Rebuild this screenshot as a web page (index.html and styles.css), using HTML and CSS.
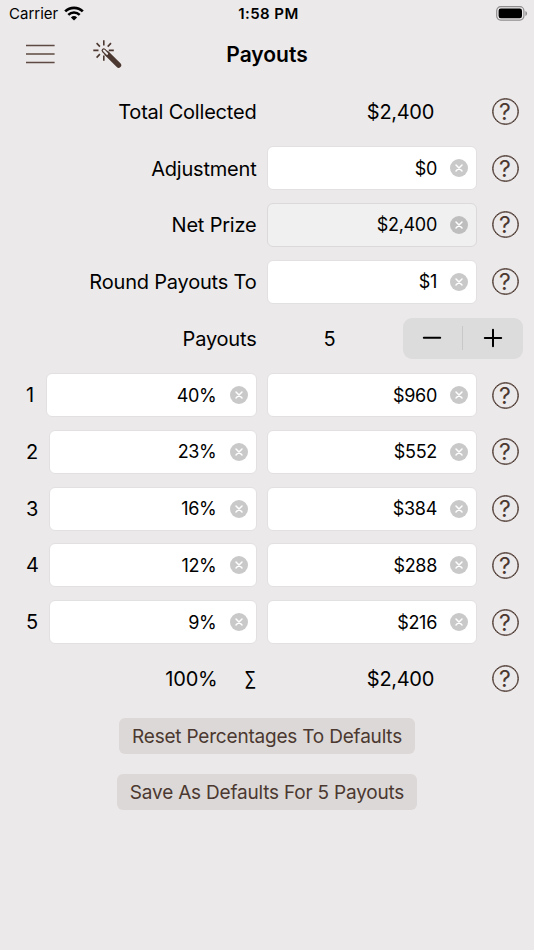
FILE: index.html
```html
<!DOCTYPE html>
<html lang="en">
<head>
    <meta charset="UTF-8">
    <meta name="viewport" content="width=device-width, initial-scale=1.0">
    <title>Payouts</title>
    <link rel="stylesheet" href="styles.css">
</head>
<body>
    <svg class="defs" width="0" height="0">
        <symbol id="clear" viewBox="0 0 18 18">
            <circle cx="9" cy="9" r="9"/>
            <path d="M6 6l6 6M12 6l-6 6" stroke="#fff" stroke-width="1.5" stroke-linecap="round"/>
        </symbol>
    </svg>

    <div class="status">
        <div class="carrier">
            <span>Carrier</span>
            <svg width="20" height="15" viewBox="0 0 20 15" fill="none" stroke="#000">
                <path d="M1.2 5.4a12.6 12.6 0 0 1 17.6 0" stroke-width="2.7"/>
                <path d="M4.3 8.8a8.2 8.2 0 0 1 11.4 0" stroke-width="2.5"/>
                <path d="M10 14.6L6.9 11.4a4.5 4.5 0 0 1 6.2 0z" fill="#000" stroke="none"/>
            </svg>
        </div>
        <div class="time">1:58 PM</div>
        <svg class="battery" width="32" height="15" viewBox="0 0 32 15">
            <rect x="0.7" y="0.7" width="27.2" height="13.4" rx="4" fill="none" stroke="#8f8d8e" stroke-width="1.2"/>
            <rect x="2.6" y="2.6" width="23.4" height="9.6" rx="2.2"/>
            <path d="M29.4 5c2.2 1 2.2 4 0 5z" fill="#8f8d8e"/>
        </svg>
    </div>

    <div class="navbar">
        <svg class="menu" width="29" height="20" viewBox="0 0 29 20" stroke="#5d4a42" stroke-width="1.3">
            <path d="M0 1.5h28.6M0 10h28.6M0 18.5h28.6"/>
        </svg>
        <svg class="wand" width="29" height="29" viewBox="0 0 29 29" fill="none" stroke="#4b3830">
            <path d="M10.8 0.3v5.2M10.8 15.5v5.2M0.3 10.4h5.2M15.8 10.4h5M3.6 3.1l3.3 3.5M18 3.1l-3.3 3.5M3.6 17.6l3.3-3.5" stroke-width="1.6"/>
            <path d="M10.8 10.6L15 14.6" stroke-width="4.4" stroke-linecap="round"/>
            <path d="M14 13.6L25.6 25.2" stroke-width="5.2" stroke-linecap="round"/>
            <path d="M10.9 10.6l3.2 3.2" stroke="#ece9ea" stroke-width="2.1" stroke-linecap="round"/>
        </svg>
        <h1>Payouts</h1>
    </div>

    <div class="rows">
        <div class="row">
            <div class="left"><span class="label">Total Collected</span></div>
            <div class="amount">$2,400</div>
            <div class="help">?</div>
        </div>
        <div class="row">
            <div class="left"><span class="label">Adjustment</span></div>
            <div class="field"><span>$0</span><svg class="clear"><use href="#clear"/></svg></div>
            <div class="help">?</div>
        </div>
        <div class="row">
            <div class="left"><span class="label">Net Prize</span></div>
            <div class="field disabled"><span>$2,400</span><svg class="clear"><use href="#clear"/></svg></div>
            <div class="help">?</div>
        </div>
        <div class="row">
            <div class="left"><span class="label">Round Payouts To</span></div>
            <div class="field"><span>$1</span><svg class="clear"><use href="#clear"/></svg></div>
            <div class="help">?</div>
        </div>
        <div class="row stepper-row">
            <div class="left"><span class="label">Payouts</span></div>
            <div class="count">5</div>
            <div class="stepper">
                <div class="step"><svg width="20" height="20" viewBox="0 0 20 20"><path d="M1.8 9.7h16.4"/></svg></div>
                <i class="divider"></i>
                <div class="step"><svg width="20" height="20" viewBox="0 0 20 20"><path d="M1.8 10h16.4M10 1.8v16.4"/></svg></div>
            </div>
        </div>
        <div class="row">
            <div class="left"><span class="place one">1</span><div class="field"><span>40%</span><svg class="clear"><use href="#clear"/></svg></div></div>
            <div class="field"><span>$960</span><svg class="clear"><use href="#clear"/></svg></div>
            <div class="help">?</div>
        </div>
        <div class="row">
            <div class="left"><span class="place">2</span><div class="field"><span>23%</span><svg class="clear"><use href="#clear"/></svg></div></div>
            <div class="field"><span>$552</span><svg class="clear"><use href="#clear"/></svg></div>
            <div class="help">?</div>
        </div>
        <div class="row">
            <div class="left"><span class="place">3</span><div class="field"><span>16%</span><svg class="clear"><use href="#clear"/></svg></div></div>
            <div class="field"><span>$384</span><svg class="clear"><use href="#clear"/></svg></div>
            <div class="help">?</div>
        </div>
        <div class="row">
            <div class="left"><span class="place">4</span><div class="field"><span>12%</span><svg class="clear"><use href="#clear"/></svg></div></div>
            <div class="field"><span>$288</span><svg class="clear"><use href="#clear"/></svg></div>
            <div class="help">?</div>
        </div>
        <div class="row">
            <div class="left"><span class="place">5</span><div class="field"><span>9%</span><svg class="clear"><use href="#clear"/></svg></div></div>
            <div class="field"><span>$216</span><svg class="clear"><use href="#clear"/></svg></div>
            <div class="help">?</div>
        </div>
        <div class="row">
            <div class="left"><span class="total">100%</span><span class="sigma">∑</span></div>
            <div class="amount">$2,400</div>
            <div class="help">?</div>
        </div>
    </div>

    <div class="actions">
        <button class="reset">Reset Percentages To Defaults</button>
        <button class="save">Save As Defaults For 5 Payouts</button>
    </div>
</body>
</html>
```

FILE: styles.css
```css
* {
    box-sizing: border-box;
}
body {
    margin: 0;
    height: 950px;
    overflow: hidden;
    background-color: #ece9ea;
    color: #000;
    font-family: Inter, "Liberation Sans", sans-serif;
    font-size: 20px;
    letter-spacing: -0.2px;
}
svg {
    display: block;
    flex: none;
}
.defs {
    position: absolute;
}
.status {
    display: grid;
    grid-template-columns: 1fr auto 1fr;
    align-items: center;
    height: 27px;
    padding: 0 6px 0 9px;
    font-size: 15px;
}
.carrier {
    display: flex;
    align-items: center;
    gap: 6px;
    letter-spacing: 0;
}
.time {
    font-weight: 600;
    letter-spacing: 0.4px;
}
.battery {
    justify-self: end;
}
.navbar {
    display: grid;
    grid-template-columns: 67px 1fr auto 1fr 67px;
    align-items: center;
    height: 56px;
    padding: 0 26px;
}
.menu, .wand {
    margin-top: -2px;
}
h1 {
    margin: -1px 0 0;
    font-size: 21px;
    font-weight: 600;
    letter-spacing: 0;
}
.row {
    display: grid;
    grid-template-columns: 230.5px 210px 28px;
    column-gap: 10.5px;
    align-items: center;
    height: 56.75px;
    padding-left: 26px;
}
.left {
    display: flex;
    align-items: center;
    justify-content: flex-end;
}
.label, .count, .amount, .total {
    padding-top: 1px;
}
.amount {
    padding-right: 43px;
    text-align: right;
    letter-spacing: -0.3px;
}
.help {
    width: 27px;
    height: 27px;
    margin-left: 4px;
    border: 1px solid #4b3830;
    border-radius: 50%;
    box-shadow: inset 0 0 0 0.5px #4b3830;
    color: #4b3830;
    font-size: 23px;
    line-height: 26px;
    text-align: center;
    letter-spacing: 0;
}
.field {
    display: flex;
    flex: 1;
    align-items: center;
    justify-content: flex-end;
    gap: 13px;
    height: 44px;
    padding-right: 8px;
    border: 1px solid #e2e0e1;
    border-radius: 6px;
    background-color: #fff;
    font-size: 18px;
    letter-spacing: -0.3px;
}
.clear {
    width: 18px;
    height: 18px;
    fill: #c9c9c9;
}
.disabled {
    background-color: #f0f0f0;
    border-color: #dbd9da;
}
.disabled .clear {
    fill: #bebebe;
}
.place {
    width: 23px;
}
.place.one {
    width: 20px;
}
.total {
    margin-right: 27px;
}
.sigma {
    width: 12px;
    transform: scaleX(0.85);
    transform-origin: left;
}
.stepper-row {
    grid-template-columns: 230.5px 125px 120.5px;
}
.count {
    text-align: center;
}
.stepper {
    display: flex;
    align-items: center;
    height: 41px;
    border-radius: 9px;
    background-color: #dcdcdc;
    stroke: #000;
    stroke-width: 2;
    stroke-linecap: round;
}
.step {
    display: flex;
    flex: 1;
    justify-content: center;
}
.divider {
    width: 1px;
    height: 24px;
    background-color: #c8c8c8;
}
.actions {
    display: flex;
    flex-direction: column;
    align-items: center;
    gap: 20.5px;
    padding-top: 10.5px;
}
button {
    height: 36px;
    padding: 1px 0 0;
    border: none;
    border-radius: 6px;
    background-color: #dcd8d7;
    color: #4b3830;
    font-family: inherit;
    font-size: 19px;
    letter-spacing: -0.2px;
}
.reset {
    width: 296px;
}
.save {
    width: 300px;
}
```
